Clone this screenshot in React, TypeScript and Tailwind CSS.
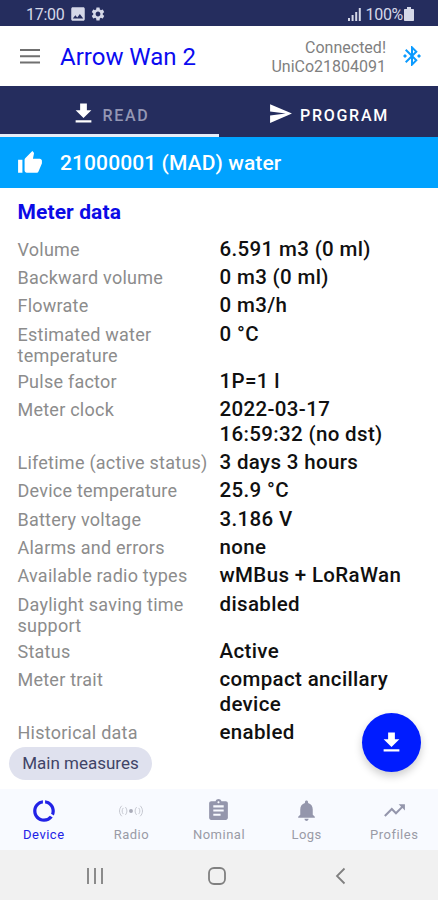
import React from 'react';
import {
  MdAssignment,
  MdBluetoothConnected,
  MdDataUsage,
  MdGetApp,
  MdImage,
  MdNotifications,
  MdSend,
  MdSettings,
  MdThumbUp,
  MdTrendingUp,
} from 'react-icons/md';

const meterData = [
  { label: 'Volume', value: '6.591 m3 (0 ml)' },
  { label: 'Backward volume', value: '0 m3 (0 ml)' },
  { label: 'Flowrate', value: '0 m3/h' },
  { label: 'Estimated water temperature', value: '0 °C' },
  { label: 'Pulse factor', value: '1P=1 l' },
  { label: 'Meter clock', value: '2022-03-17 16:59:32 (no dst)' },
  { label: 'Lifetime (active status)', value: '3 days 3 hours' },
  { label: 'Device temperature', value: '25.9 °C' },
  { label: 'Battery voltage', value: '3.186 V' },
  { label: 'Alarms and errors', value: 'none' },
  { label: 'Available radio types', value: 'wMBus + LoRaWan' },
  { label: 'Daylight saving time support', value: 'disabled' },
  { label: 'Status', value: 'Active' },
  { label: 'Meter trait', value: 'compact ancillary device' },
  { label: 'Historical data', value: 'enabled' },
];

const RadioIcon: React.FC = () => (
  <svg width="28" height="14" viewBox="0 0 28 16" fill="none" stroke="#bfc1ca" strokeWidth="1">
    <circle cx="14" cy="8" r="2.2" fill="#a9abb8" stroke="none" />
    <path d="M7.500 3.500c2.400 2.500 2.400 6.500 0 9M5.200 4.500c-1.800 2-1.800 5 0 7M3.500 2c-3.500 3.500-3.500 8.500 0 12" />
    <path d="M20.500 3.500c-2.400 2.500-2.400 6.500 0 9M22.800 4.500c1.800 2 1.800 5 0 7M24.500 2c3.500 3.500 3.500 8.500 0 12" />
  </svg>
);

const tabs = [
  { name: 'Device', icon: <MdDataUsage size={26} />, active: true },
  { name: 'Radio', icon: <RadioIcon /> },
  { name: 'Nominal', icon: <MdAssignment size={25} /> },
  { name: 'Logs', icon: <MdNotifications size={25} /> },
  { name: 'Profiles', icon: <MdTrendingUp size={25} /> },
];

const StatusBar: React.FC = () => (
  <div className="h-[26px] shrink-0 bg-[#252d5e] flex items-center pl-[26px] pr-6 pt-[2px] text-[#d5d8e8]">
    <span className="pt-px text-[16px] leading-none tracking-[-0.3px]">17:00</span>
    <MdImage size={18} className="ml-[5px]" />
    <MdSettings size={16} className="ml-[3px]" />
    <svg className="ml-auto" width="13" height="13" viewBox="0 0 13 13" fill="currentColor">
      <path d="M0 10h2v3H0zM3.600 7h2v6h-2zM7.200 4h2v9h-2zM10.800 0h2v13h-2z" />
    </svg>
    <span className="ml-[5px] pt-px text-[16px] leading-none tracking-[-0.3px]">100%</span>
    <svg className="ml-px" width="10" height="14" viewBox="0 0 10 14" fill="currentColor">
      <path d="M3 0h4v2h2.200q.8 0 .8.8v10.400q0 .8-.8.8H.8q-.8 0-.8-.8V2.800Q0 2 .8 2H3z" />
    </svg>
  </div>
);

const Header: React.FC = () => (
  <header className="h-[60px] shrink-0 flex items-center pl-5 pr-[14px] bg-white">
    <svg width="20" height="15" viewBox="0 0 20 15" fill="#707070">
      <path d="M0 0h20v2H0zM0 6.300h20v2H0zM0 12.600h20v2H0z" />
    </svg>
    <h1 className="ml-5 pt-[2px] text-[24px] leading-none text-[#0b0bf0]">Arrow Wan 2</h1>
    <div className="ml-auto pt-px text-right text-[16px] leading-[19px] text-[#7f7f7f]">
      <p>Connected!</p>
      <p>UniCo21804091</p>
    </div>
    <MdBluetoothConnected size={24} className="ml-[14px] text-[#0c9bff]" />
  </header>
);

const ModeTabs: React.FC = () => (
  <div className="h-[51px] shrink-0 grid grid-cols-2 bg-[#252d5e] font-medium text-[16px] tracking-[1.7px]">
    <button className="flex items-center justify-center pt-[7px] border-b-[3px] border-[#e6edf8]">
      <MdGetApp size={27} className="text-white" />
      <span className="ml-[6px] pt-[5px] text-[#9497b4]">READ</span>
    </button>
    <button className="flex items-center justify-center pt-[7px] border-b-[3px] border-transparent text-white">
      <MdSend size={25} />
      <span className="ml-[7px] pt-[5px]">PROGRAM</span>
    </button>
  </div>
);

export default function App() {
  return (
    <div className="relative w-[438px] h-[900px] flex flex-col overflow-hidden bg-white font-['Roboto',sans-serif]">
      <StatusBar />
      <Header />
      <ModeTabs />
      <div className="h-[51px] shrink-0 flex items-center pl-[17px] bg-[#00a2ff] text-white">
        <MdThumbUp size={26} />
        <span className="ml-[17px] pt-[2px] text-[21px] font-medium tracking-[0.1px]">21000001 (MAD) water</span>
      </div>

      <main className="h-[551px] shrink-0 pl-[17.5px] pr-7 overflow-hidden">
        <h2 className="h-[48.7px] pt-[11px] text-[21px] leading-[26px] font-bold tracking-[0.1px] text-[#0b0be6]">
          Meter data
        </h2>
        {meterData.map((row) => (
          <div key={row.label} className="grid grid-cols-[202px_1fr] items-baseline pb-[3.4px]">
            <span className="-mb-[1.8px] text-[18px] leading-[21.7px] tracking-[0.24px] text-[#8c8c8c]">{row.label}</span>
            <span className="text-[20.5px] leading-[24.9px] font-medium tracking-[0.35px] text-[#101010]">{row.value}</span>
          </div>
        ))}
      </main>

      <div className="h-[50px] shrink-0 pl-[9px] pt-2">
        <button className="h-[33px] w-[143px] rounded-full bg-[#dfe1ee] text-[17px] text-[#3f4467]">Main measures</button>
      </div>
      <button className="absolute left-[362px] top-[713px] size-[59px] rounded-full bg-[#001cff] text-white flex items-center justify-center shadow-[0_4px_8px_rgba(0,0,0,0.2)]">
        <MdGetApp size={27} />
      </button>

      <nav className="h-[61px] shrink-0 grid grid-cols-5 bg-[#f8faff]">
        {tabs.map((tab) => (
          <button
            key={tab.name}
            className={`flex flex-col items-center pt-2 text-[13px] ${tab.active ? 'text-[#2222e6]' : 'text-[#9496ac]'}`}
          >
            <span className="h-[27px] flex items-center">{tab.icon}</span>
            <span className={`pt-px tracking-[0.5px] ${tab.active ? '' : 'text-[#9a9ba6]'}`}>{tab.name}</span>
          </button>
        ))}
      </nav>

      <footer className="flex-1 bg-[#f1f1f1] text-[#808080]">
        <svg width="438" height="50" viewBox="0 0 438 50" fill="none" stroke="currentColor" strokeWidth="1.8">
          <path d="M88 18v16M95 18v16M102 18v16" />
          <rect x="209" y="18" width="16" height="16" rx="5" />
          <path d="M344.500 18.500l-7.500 7.500 7.500 7.500" />
        </svg>
      </footer>
    </div>
  );
}
